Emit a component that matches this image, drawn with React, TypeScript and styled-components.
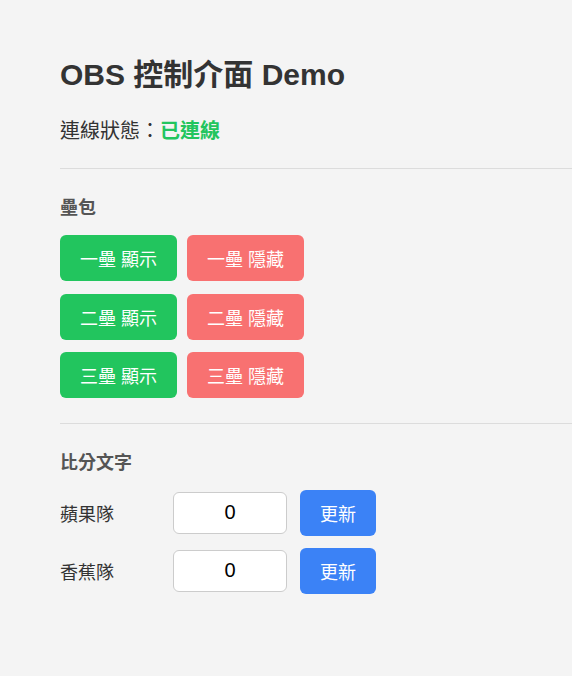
import styled, { createGlobalStyle } from "styled-components";
import { useState } from "react";

const GlobalStyle = createGlobalStyle`
  html, body {
    margin: 0;
    padding: 0;
    background: #f4f4f4;
  }
  body {
    font-family: "Liberation Sans", "Noto Sans CJK TC", sans-serif;
    color: #333;
  }
`;

const Page = styled.div`
  min-height: 676px;
  padding: 57px 0 40px 60px;
  box-sizing: border-box;
`;

const Title = styled.h1`
  margin: 0;
  font-size: 30px;
  line-height: 36px;
  font-weight: 700;
  color: #333;
`;

const Status = styled.p`
  margin: 24px 0 0;
  font-size: 20px;
  line-height: 28px;
  color: #333;
`;

const Connected = styled.span<{ $ok: boolean }>`
  color: ${(p) => (p.$ok ? "#22c55e" : "#ef4444")};
  font-weight: 700;
`;

const Divider = styled.div<{ $top?: number }>`
  height: 1px;
  background: #dcdcdc;
  margin: ${(p) => p.$top ?? 25}px 0 27px;
`;

const SectionTitle = styled.h3`
  margin: 0 0 15px;
  font-size: 18px;
  line-height: 24px;
  font-weight: 700;
  color: #555;
`;

const ButtonGrid = styled.div`
  display: flex;
  flex-direction: column;
  gap: 12.5px;
`;

const ButtonRow = styled.div`
  display: flex;
  gap: 10px;
`;

const ActionButton = styled.button<{ $tone: "show" | "hide" | "update" }>`
  height: 46px;
  padding: 0 20px;
  border: none;
  border-radius: 6px;
  background: ${(p) =>
    p.$tone === "show" ? "#22c55e" : p.$tone === "hide" ? "#f87171" : "#3b82f6"};
  color: #fff;
  font-family: "Liberation Sans", "Noto Sans CJK TC", sans-serif;
  font-size: 18px;
  cursor: pointer;
`;

const ScoreList = styled.div`
  display: flex;
  flex-direction: column;
  gap: 12px;
`;

const ScoreRow = styled.div`
  display: flex;
  align-items: center;
`;

const TeamName = styled.span`
  width: 113px;
  font-size: 18px;
  color: #333;
`;

const ScoreInput = styled.input`
  width: 114px;
  height: 42px;
  box-sizing: border-box;
  margin-right: 13px;
  border: 1px solid #cccccc;
  border-radius: 6px;
  background: #fff;
  text-align: center;
  font-family: "Liberation Sans", sans-serif;
  font-size: 20px;
  color: #000;
  padding: 0 0 2px;
`;

const bases = ["一壘", "二壘", "三壘"];

const App = () => {
  const [scores, setScores] = useState({ apple: "0", banana: "0" });

  return (
    <Page>
      <GlobalStyle />
      <Title>OBS 控制介面 Demo</Title>
      <Status>
        連線狀態：<Connected $ok>已連線</Connected>
      </Status>

      <Divider $top={23} />

      <SectionTitle>壘包</SectionTitle>
      <ButtonGrid>
        {bases.map((b) => (
          <ButtonRow key={b}>
            <ActionButton $tone="show">{b} 顯示</ActionButton>
            <ActionButton $tone="hide">{b} 隱藏</ActionButton>
          </ButtonRow>
        ))}
      </ButtonGrid>

      <Divider />

      <SectionTitle>比分文字</SectionTitle>
      <ScoreList>
        <ScoreRow>
          <TeamName>蘋果隊</TeamName>
          <ScoreInput
            value={scores.apple}
            onChange={(e) => setScores({ ...scores, apple: e.target.value })}
          />
          <ActionButton $tone="update">更新</ActionButton>
        </ScoreRow>
        <ScoreRow>
          <TeamName>香蕉隊</TeamName>
          <ScoreInput
            value={scores.banana}
            onChange={(e) => setScores({ ...scores, banana: e.target.value })}
          />
          <ActionButton $tone="update">更新</ActionButton>
        </ScoreRow>
      </ScoreList>
    </Page>
  );
};

export default App;
